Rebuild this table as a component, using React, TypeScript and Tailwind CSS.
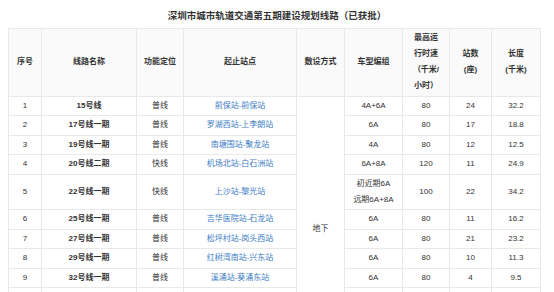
import React from "react";

type Row = {
  no: string;
  name: string;
  role: string;
  route: string;
  car: React.ReactNode;
  speed: string;
  stations: string;
  length: string;
};

const rows: Row[] = [
  { no: "1", name: "15号线", role: "普线", route: "前保站-前保站", car: "4A+6A", speed: "80", stations: "24", length: "32.2" },
  { no: "2", name: "17号线一期", role: "普线", route: "罗湖西站-上李朗站", car: "6A", speed: "80", stations: "17", length: "18.8" },
  { no: "3", name: "19号线一期", role: "普线", route: "南塘围站-聚龙站", car: "4A", speed: "80", stations: "12", length: "12.5" },
  { no: "4", name: "20号线二期", role: "快线", route: "机场北站-白石洲站", car: "6A+8A", speed: "120", stations: "11", length: "24.9" },
  {
    no: "5",
    name: "22号线一期",
    role: "快线",
    route: "上沙站-黎光站",
    car: (
      <>
        初近期6A
        <br />
        远期6A+8A
      </>
    ),
    speed: "100",
    stations: "22",
    length: "34.2",
  },
  { no: "6", name: "25号线一期", role: "普线", route: "吉华医院站-石龙站", car: "6A", speed: "80", stations: "11", length: "16.2" },
  { no: "7", name: "27号线一期", role: "普线", route: "松坪村站-岗头西站", car: "6A", speed: "80", stations: "21", length: "23.2" },
  { no: "8", name: "29号线一期", role: "普线", route: "红树湾南站-兴东站", car: "6A", speed: "80", stations: "10", length: "11.3" },
  { no: "9", name: "32号线一期", role: "普线", route: "溪涌站-葵涌东站", car: "6A", speed: "80", stations: "4", length: "9.5" },
];

const td = "border border-[#e8e8e8] text-center align-middle leading-[16px] py-[1.25px] px-0";
const th = "border border-[#e8e8e8] text-center align-middle leading-[16px] py-[1.25px] px-0 font-bold bg-[#fafafa]";

export default function App() {
  return (
    <div
      className="w-[554px] h-[292px] overflow-hidden bg-white text-[#333333] px-[8px]"
      style={{ fontFamily: '"Liberation Sans", "Noto Sans CJK SC", sans-serif' }}
    >
      <div className="pt-[8px] h-[28px] text-center text-[9.5px] font-bold leading-[15px] text-[#333333]">
        深圳市城市轨道交通第五期建设规划线路（已获批）
      </div>
      <table className="table-fixed border-collapse w-[533px] text-[8px]">
        <colgroup>
          <col className="w-[33px]" />
          <col className="w-[95px]" />
          <col className="w-[47px]" />
          <col className="w-[113px]" />
          <col className="w-[48px]" />
          <col className="w-[58px]" />
          <col className="w-[47px]" />
          <col className="w-[42px]" />
          <col className="w-[49px]" />
        </colgroup>
        <thead>
          <tr>
            <th className={th}>序号</th>
            <th className={th}>线路名称</th>
            <th className={th}>功能定位</th>
            <th className={th}>起止站点</th>
            <th className={th}>敷设方式</th>
            <th className={th}>车型编组</th>
            <th className={th}>
              最高运
              <br />
              行时速
              <br />
              （千米/
              <br />
              小时）
            </th>
            <th className={th}>
              站数
              <br />
              (座)
            </th>
            <th className={th}>
              长度
              <br />
              (千米)
            </th>
          </tr>
        </thead>
        <tbody>
          {rows.map((r, i) => (
            <tr key={r.no}>
              <td className={td}>{r.no}</td>
              <td className={`${td} font-bold`}>{r.name}</td>
              <td className={td}>{r.role}</td>
              <td className={`${td} text-[#3a7bc6]`}>{r.route}</td>
              {i === 0 && (
                <td rowSpan={rows.length + 1} className={`${td} align-top pt-[124px]`}>
                  地下
                </td>
              )}
              <td className={td}>{r.car}</td>
              <td className={td}>{r.speed}</td>
              <td className={td}>{r.stations}</td>
              <td className={td}>{r.length}</td>
            </tr>
          ))}
          <tr>
            <td className={`${td} h-[20px]`}></td>
            <td className={td}></td>
            <td className={td}></td>
            <td className={td}></td>
            <td className={td}></td>
            <td className={td}></td>
            <td className={td}></td>
            <td className={td}></td>
          </tr>
        </tbody>
      </table>
    </div>
  );
}
